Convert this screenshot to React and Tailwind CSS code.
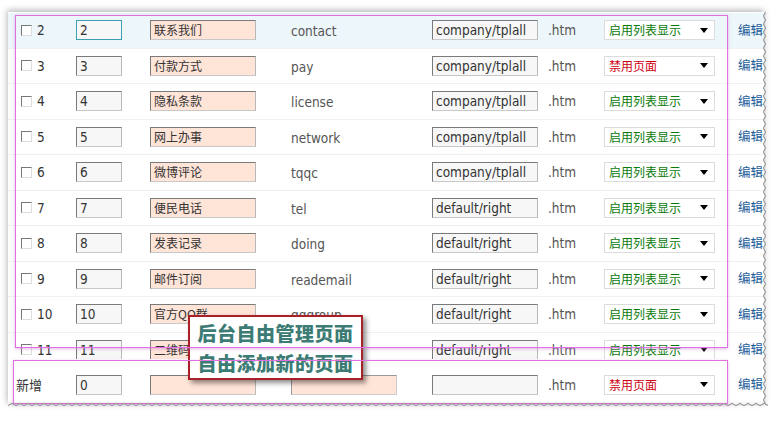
import React from 'react';

const rows = [
  { id: 2, name: '联系我们', slug: 'contact', tpl: 'company/tplall', on: true },
  { id: 3, name: '付款方式', slug: 'pay', tpl: 'company/tplall', on: false },
  { id: 4, name: '隐私条款', slug: 'license', tpl: 'company/tplall', on: true },
  { id: 5, name: '网上办事', slug: 'network', tpl: 'company/tplall', on: true },
  { id: 6, name: '微博评论', slug: 'tqqc', tpl: 'company/tplall', on: true },
  { id: 7, name: '便民电话', slug: 'tel', tpl: 'default/right', on: true },
  { id: 8, name: '发表记录', slug: 'doing', tpl: 'default/right', on: true },
  { id: 9, name: '邮件订阅', slug: 'reademail', tpl: 'default/right', on: true },
  { id: 10, name: '官方QQ群', slug: 'qqgroup', tpl: 'default/right', on: true },
  { id: 11, name: '二维码', slug: 'qrcode', tpl: 'default/right', on: true },
];

const latin = "font-['Tahoma','DejaVu_Sans_Condensed','DejaVu_Sans',sans-serif]";
const cjk = "font-['Noto_Sans_CJK_SC',sans-serif]";

const Field = ({ value, w, peach, focus, cn }) => (
  <div
    className={`h-[20px] ${w} flex items-center pl-[3px] overflow-hidden whitespace-nowrap border ${
      focus ? 'border-[#3aa0b4]' : 'border-[#7a7a7a] border-r-[#b8b8b8] border-b-[#c8c8c8]'
    } ${peach ? 'bg-[#ffe4d8]' : 'bg-[#f7f7f7]'} ${cn ? `${cjk} text-[12px] text-[#333]` : `${latin} text-[13.5px] text-[#333]`}`}
  >
    {value}
  </div>
);

const Status = ({ on }) => (
  <div className="h-[20px] w-[111px] bg-white border border-[#dcdcdc] flex items-center justify-between pl-[4px] pr-[6px]">
    <span className={`${cjk} text-[12px] leading-none ${on ? 'text-[#0a7a0a]' : 'text-[#d00010]'}`}>
      {on ? '启用列表显示' : '禁用页面'}
    </span>
    <span className="w-0 h-0 border-l-[4px] border-r-[4px] border-t-[5px] border-l-transparent border-r-transparent border-t-black" />
  </div>
);

const Row = ({ row, first, label }) => (
  <div className={`h-[35.5px] shrink-0 flex items-center border-b border-[#f0f0f0] ${first ? 'bg-[#edf6fb]' : ''}`}>
    <div className="w-[68px] flex items-center">
      {label ? (
        <span className={`${cjk} text-[13px] text-[#333] pl-[8px]`}>{label}</span>
      ) : (
        <div className="flex items-center pl-[13px] gap-[5px]">
          <span className="w-[11px] h-[11px] bg-white border border-[#777] border-r-[#ddd] border-b-[#ddd]" />
          <span className={`${latin} text-[13.5px] text-[#333]`}>{row.id}</span>
        </div>
      )}
    </div>
    <div className="w-[74px]">
      <Field value={label ? 0 : row.id} w="w-[46px]" focus={first} />
    </div>
    <div className="w-[141px]">
      <Field value={label ? '' : row.name} w="w-[106px]" peach cn />
    </div>
    <div className="w-[141px]">
      {label ? (
        <div className="h-[20px] w-[106px] bg-[#ffe4d8] border border-[#9a9a9a] border-r-[#ccc] border-b-[#ccc]" />
      ) : (
        <span className={`${latin} text-[13.5px] text-[#555]`}>{row.slug}</span>
      )}
    </div>
    <div className="w-[116px]">
      <Field value={label ? '' : row.tpl} w="w-[106px]" />
    </div>
    <div className={`w-[56px] ${latin} text-[13.5px] text-[#555]`}>.htm</div>
    <div className="w-[134px]">
      <Status on={label ? false : row.on} />
    </div>
    <span className={`${cjk} text-[12.5px] text-[#1d5d98] whitespace-nowrap`}>编辑</span>
  </div>
);

export default function App() {
  const main = rows.slice(0, 9);
  const last = rows[9];
  return (
    <div className="w-[780px] h-[421px] bg-white pt-[12px] pl-[8px] overflow-hidden">
      <div className="relative w-[757px] h-[393px] bg-white shadow-[-1px_-2px_6px_rgba(0,0,0,0.28)]">
        <div className="w-[757px] h-[393px] overflow-hidden pt-[1px] flex flex-col">
          {main.map((r, i) => (
            <Row key={r.id} row={r} first={i === 0} />
          ))}
          <Row row={last} />
          <div className="h-[44px] shrink-0 bg-white -mt-[9px] pt-[8.5px]">
            <Row row={{}} label="新增" />
          </div>
        </div>

        {/* tooltip */}
        <div className="absolute left-[180px] top-[303px] w-[175px] h-[65px] bg-white border-2 border-[#aa2028] shadow-[3px_3px_5px_rgba(0,0,0,0.45)] flex flex-col items-center justify-center gap-[6px] z-10">
          <span className={`${cjk} font-black text-[19px] leading-[24px] tracking-[0.5px] text-[#3c7c74]`}>后台自由管理页面</span>
          <span className={`${cjk} font-black text-[19px] leading-[24px] tracking-[0.5px] text-[#3c7c74]`}>自由添加新的页面</span>
        </div>

        {/* annotation frames */}
        <div className="absolute left-[7px] top-[3px] w-[713px] h-[333px] border-[1.5px] border-[#e070e0] shadow-[0_1px_3px_rgba(200,120,210,0.5)] z-20" />
        <div className="absolute left-[5px] top-[348px] w-[715px] h-[44px] border-[1.5px] border-[#e070e0] shadow-[0_1px_3px_rgba(200,120,210,0.5)] z-20" />

        {/* torn edges */}
        <svg className="absolute right-[-3px] top-0 z-30" width="6" height="395" viewBox="0 0 6 395">
          <polyline
            fill="none"
            stroke="#9a9a9a"
            strokeWidth="1.2"
            points={Array.from({ length: 99 }, (_, i) => `${i % 2 ? 1.5 : 3.5},${i * 4}`).join(' ')}
          />
        </svg>
        <svg className="absolute left-0 bottom-[-3px] z-30" width="760" height="6" viewBox="0 0 760 6">
          <polyline
            fill="none"
            stroke="#9a9a9a"
            strokeWidth="1.2"
            points={Array.from({ length: 191 }, (_, i) => `${i * 4},${i % 2 ? 1.5 : 3.5}`).join(' ')}
          />
        </svg>
      </div>
    </div>
  );
}
